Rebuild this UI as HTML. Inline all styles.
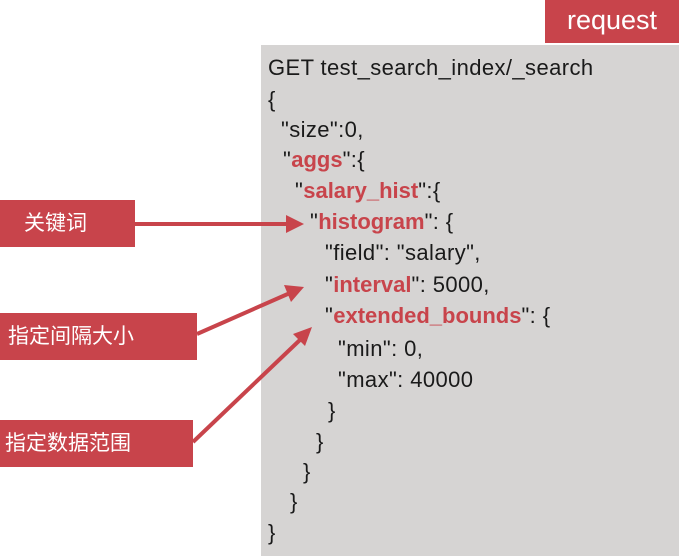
<!DOCTYPE html><html><head><meta charset="utf-8"><style>
body{margin:0;width:679px;height:556px;background:#fff;position:relative;overflow:hidden;font-family:"Liberation Sans","Noto Sans CJK SC",sans-serif}
.req{position:absolute;left:545px;top:0;width:134px;height:43px;background:#c8444b;color:#fff;font-size:27px;line-height:40px;text-align:center}
.code{position:absolute;left:261px;top:45px;width:418px;height:511px;background:#d6d4d3}
.l{position:absolute;font-size:22px;color:#1a1a1a;white-space:pre;letter-spacing:0.4px;margin-top:3px}
.r{color:#c8444b;font-weight:bold;letter-spacing:0}
.lab{position:absolute;left:0;background:#c8444b;color:#fff;font-size:21px;line-height:47px;height:47px;padding-left:8px;box-sizing:border-box}
</style></head><body>
<div class="req">request</div>
<div class="code"></div>
<div class="l" style="left:268px;top:52px">GET test_search_index/_search</div>
<div class="l" style="left:268px;top:84px">{</div>
<div class="l" style="left:281px;top:114px">"size":0,</div>
<div class="l" style="left:283px;top:144px">"<span class="r">aggs</span>":{</div>
<div class="l" style="left:295px;top:175px">"<span class="r">salary_hist</span>":{</div>
<div class="l" style="left:310px;top:206px">"<span class="r">histogram</span>": {</div>
<div class="l" style="left:325px;top:237px">"field": "salary",</div>
<div class="l" style="left:325px;top:269px">"<span class="r">interval</span>": 5000,</div>
<div class="l" style="left:325px;top:300px">"<span class="r">extended_bounds</span>": {</div>
<div class="l" style="left:338px;top:333px">"min": 0,</div>
<div class="l" style="left:338px;top:364px">"max": 40000</div>
<div class="l" style="left:328px;top:395px">}</div>
<div class="l" style="left:316px;top:426px">}</div>
<div class="l" style="left:303px;top:456px">}</div>
<div class="l" style="left:290px;top:486px">}</div>
<div class="l" style="left:268px;top:517px">}</div>
<div class="lab" style="top:200px;width:135px;padding-left:24px">关键词</div>
<div class="lab" style="top:313px;width:197px;">指定间隔大小</div>
<div class="lab" style="top:420px;width:193px;padding-left:5px">指定数据范围</div>
<svg width="679" height="556" style="position:absolute;left:0;top:0">
<g stroke="#c8444b" stroke-width="4" fill="#c8444b">
<line x1="135" y1="224" x2="290" y2="224"/><polygon points="304,224 286,215 286,233" stroke="none"/>
<line x1="197" y1="334" x2="290" y2="293"/><polygon points="304,287 284,285 291,302" stroke="none"/>
<line x1="193" y1="442" x2="302" y2="338"/><polygon points="312,327 293,334 305,346" stroke="none"/>
</g></svg>
</body></html>
